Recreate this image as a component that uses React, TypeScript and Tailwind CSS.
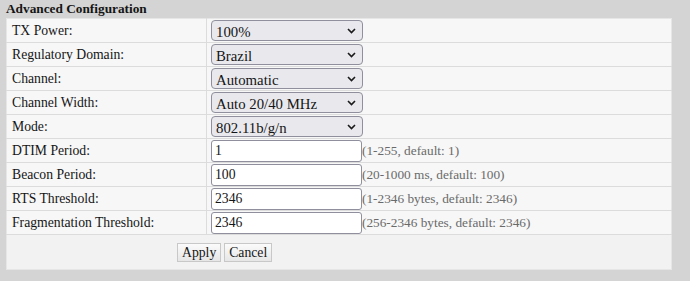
import React from 'react';

const selectRows = [
  { label: 'TX Power:', value: '100%' },
  { label: 'Regulatory Domain:', value: 'Brazil' },
  { label: 'Channel:', value: 'Automatic' },
  { label: 'Channel Width:', value: 'Auto 20/40 MHz' },
  { label: 'Mode:', value: '802.11b/g/n' },
];

const inputRows = [
  { label: 'DTIM Period:', value: '1', hint: '(1-255, default: 1)' },
  { label: 'Beacon Period:', value: '100', hint: '(20-1000 ms, default: 100)' },
  { label: 'RTS Threshold:', value: '2346', hint: '(1-2346 bytes, default: 2346)' },
  { label: 'Fragmentation Threshold:', value: '2346', hint: '(256-2346 bytes, default: 2346)' },
];

const Chevron = () => (
  <svg width="9" height="6" viewBox="0 0 9 6" className="absolute right-[7px] top-[8px] pointer-events-none">
    <path d="M1 1 L4.5 4.5 L8 1" fill="none" stroke="#1a1a1a" strokeWidth="1.6" />
  </svg>
);

const Select = ({ value }: { value: string }) => (
  <div className="relative w-[152px] h-[21px]">
    <select
      defaultValue={value}
      className="appearance-none w-full h-full rounded-[4px] border border-[#8f8f9d] bg-[#e9e9ed] pl-[4px] text-[14.8px] text-[#151515] outline-none"
      style={{ fontFamily: '"Liberation Serif", serif' }}
    >
      <option>{value}</option>
    </select>
    <Chevron />
  </div>
);

export default function App() {
  return (
    <div className="min-h-[281px] bg-[#d4d4d4] px-[6px] text-[#151515]" style={{ fontFamily: '"Liberation Serif", serif' }}>
      <div className="h-[18px] text-[13.3px] font-bold leading-[17px]">Advanced Configuration</div>
      <table className="w-[666px] border-collapse border border-[#e6e6e6] text-[13.7px]">
        <tbody>
          {selectRows.map((r) => (
            <tr key={r.label} className="h-[24px] bg-[#f7f7f7] border-b border-[#dcdcdc]">
              <td className="w-[200px] border-r border-[#dcdcdc] pl-[5px] pt-[2px] align-middle">{r.label}</td>
              <td className="pl-[4px] align-middle" colSpan={2}>
                <Select value={r.value} />
              </td>
            </tr>
          ))}
          {inputRows.map((r) => (
            <tr key={r.label} className="h-[24px] bg-[#f7f7f7] border-b border-[#dcdcdc]">
              <td className="w-[200px] border-r border-[#dcdcdc] pl-[5px] pt-[2px] align-middle">{r.label}</td>
              <td className="pl-[4px] align-middle">
                <div className="flex items-center">
                  <input
                    defaultValue={r.value}
                    className="w-[151px] h-[22px] rounded-[3px] border border-[#8f8f9d] bg-white pl-[3px] text-[13.7px] text-[#151515] outline-none"
                    style={{ fontFamily: '"Liberation Serif", serif' }}
                  />
                  <span className="text-[13.3px] text-[#6a6a6a] whitespace-nowrap">{r.hint}</span>
                </div>
              </td>
            </tr>
          ))}
          <tr className="h-[35px] bg-[#f2f2f2]">
            <td colSpan={2}>
              <div className="flex gap-[3px] pl-[170px]">
                <button className="h-[19px] px-[4px] border border-[#c8c8c8] bg-gradient-to-b from-[#fbfbfb] to-[#e6e6e6] text-[13.7px] leading-[17px]">Apply</button>
                <button className="h-[19px] px-[4px] border border-[#c8c8c8] bg-gradient-to-b from-[#fbfbfb] to-[#e6e6e6] text-[13.7px] leading-[17px]">Cancel</button>
              </div>
            </td>
          </tr>
        </tbody>
      </table>
    </div>
  );
}
